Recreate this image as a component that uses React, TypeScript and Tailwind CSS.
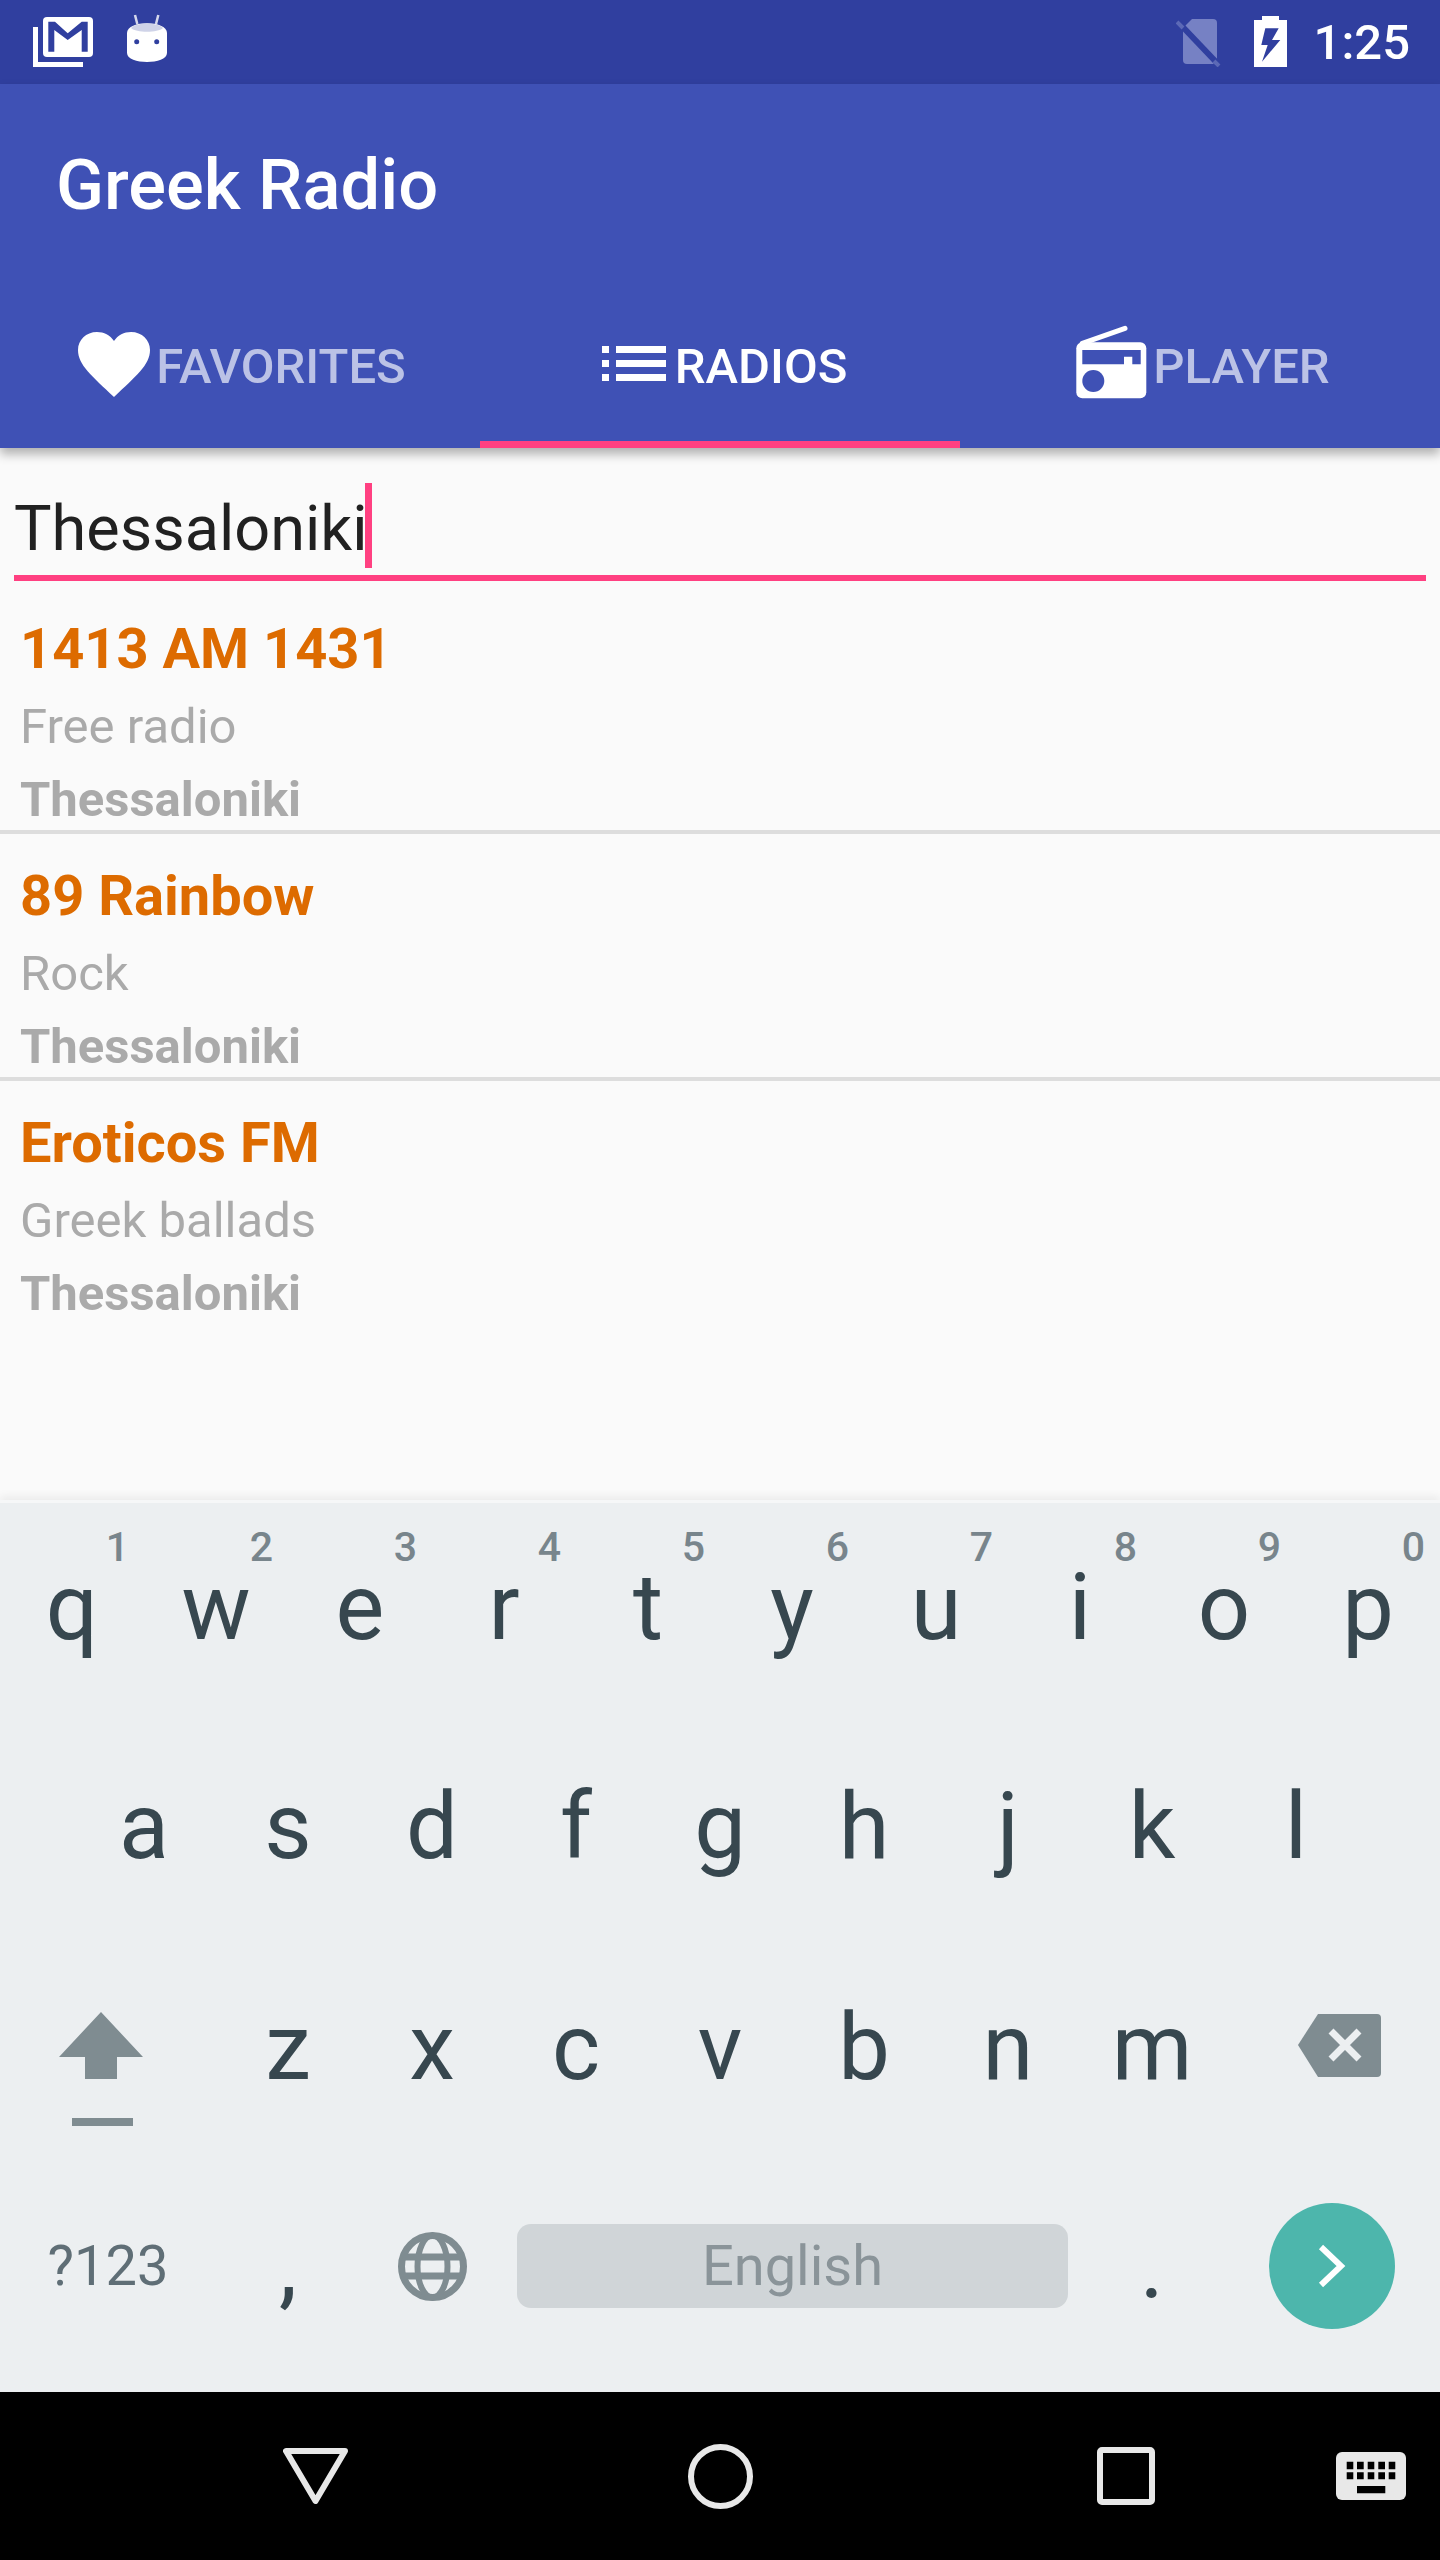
const ROW_1 = [
  ['q', '1'], ['w', '2'], ['e', '3'], ['r', '4'], ['t', '5'],
  ['y', '6'], ['u', '7'], ['i', '8'], ['o', '9'], ['p', '0'],
]
const ROW_2 = ['a', 's', 'd', 'f', 'g', 'h', 'j', 'k', 'l']
const ROW_3 = ['z', 'x', 'c', 'v', 'b', 'n', 'm']

const STATIONS = [
  { name: '1413 AM 1431', genre: 'Free radio', city: 'Thessaloniki' },
  { name: '89 Rainbow', genre: 'Rock', city: 'Thessaloniki' },
  { name: 'Eroticos FM', genre: 'Greek ballads', city: 'Thessaloniki' },
]

function StatusBar() {
  return (
    <div className="flex h-[84px] shrink-0 items-start bg-[#303f9f] pl-[33px]">
      <svg width="60" height="50" viewBox="0 0 60 50" className="mt-[17px]">
        <path d="M2.500 10v37.500h47.500" fill="none" stroke="#fff" strokeWidth="5" />
        <rect x="10" y="0" width="50" height="40" rx="4" fill="#fff" />
        <path d="M15.300 4.700H22L34.700 16.300 48.700 4.700h6v30h-6V13L34.700 23 21.300 13v21.700h-6z" fill="#303f9f" />
      </svg>
      <svg width="40" height="48" viewBox="0 0 40 48" className="ml-[34px] mt-[14px]">
        <path d="M8 1l2.300 9M31.300 1L29 10" stroke="#d5d8ec" strokeWidth="2.500" />
        <path d="M0 19C0 6 40 6 40 19v20c0 12-40 12-40 0z" fill="#fff" />
        <path d="M4 14c5-6 27-6 32 0-5 5-27 5-32 0z" fill="#cfd3e8" />
        <circle cx="9.700" cy="27.700" r="2.500" fill="#303f9f" />
        <circle cx="29.700" cy="27.700" r="2.500" fill="#303f9f" />
      </svg>
      <svg width="46" height="48" viewBox="0 0 46 48" className="ml-auto mt-[19px]">
        <path d="M16 0h21a4 4 0 0 1 4 4v41H11a4 4 0 0 1-4-4V9z" fill="#7681c4" />
        <path d="M3 4l39 41" stroke="#303f9f" strokeWidth="6" />
        <path d="M1 3l6 6M38 42l5 5" stroke="#5c69b6" strokeWidth="4" />
      </svg>
      <svg width="34" height="51" viewBox="0 0 34 51" className="ml-[31px] mt-[16px]">
        <path d="M9 0h17v4h8v47H1V4h8z" fill="#fff" />
        <path d="M12.300 12.300h13.400L19 24h8.300L9 45.700 14.700 29H8.300z" fill="#303f9f" />
      </svg>
      <span className="ml-[27px] mr-[30px] mt-[14px] text-[49px] font-medium leading-[58px] text-white">1:25</span>
    </div>
  )
}

function TabBar() {
  return (
    <div className="grid h-[168px] grid-cols-3">
      <div className="flex items-start justify-center pl-[4px] pt-[52px]">
        <svg width="72" height="65" viewBox="0 0 72 65">
          <path d="M36 65C14 44 0 33 0 18 0 8 8 0 19 0c7 0 13 3 17 9 4-6 10-9 17-9 11 0 19 8 19 18 0 15-14 26-36 47z" fill="#fff" />
        </svg>
        <span className="ml-[6px] mt-[6px] text-[49px] font-medium leading-[58px] text-[#bbc2e6]">FAVORITES</span>
      </div>
      <div className="flex items-start justify-center border-b-[7px] border-[#ff4081] pl-[8px] pt-[66px]">
        <svg width="65" height="36" viewBox="0 0 65 36">
          <path d="M1 0h7v7H1zM1 14h7v7H1zM1 28h7v7H1zM15 0h50v7H15zM15 14h50v7H15zM15 28h50v7H15z" fill="#fff" />
        </svg>
        <span className="ml-[9px] mt-[-8px] text-[49px] font-medium leading-[58px] text-white">RADIOS</span>
      </div>
      <div className="flex items-start justify-center pl-[5px] pt-[45px]">
        <svg width="72" height="74" viewBox="0 0 72 74">
          <path d="M7.300 18.300L50 3.300" fill="none" stroke="#fff" strokeWidth="5" strokeLinecap="round" />
          <rect x="1.300" y="17.300" width="70" height="56" rx="6" fill="#fff" />
          <path d="M7.300 25h58.400v14.300h-8.400v-7.600H49v7.600H7.300z" fill="#3f51b5" />
          <circle cx="18.300" cy="56" r="11" fill="#3f51b5" />
        </svg>
        <span className="ml-[6px] mt-[13px] text-[49px] font-medium leading-[58px] text-[#bbc2e6]">PLAYER</span>
      </div>
    </div>
  )
}

function SearchField() {
  return (
    <div className="mx-[14px] flex h-[133px] items-start border-b-[6px] border-[#ff4081]">
      <span className="mt-[46px] text-[63px] leading-[70px] text-[#212121]">Thessaloniki</span>
      {/* caret sits tight against the last letter */}
      <span className="-ml-[3px] mt-[35px] h-[85px] w-[7px] bg-[#ff4081]" />
    </div>
  )
}

function StationRow({ name, genre, city, last }: { name: string; genre: string; city: string; last: boolean }) {
  return (
    <div className={`pl-[20px] pt-[30px] ${last ? '' : 'border-b-4 border-[#dddddd]'}`}>
      <div className="text-[56px] font-bold leading-[64px] text-[#dd6b00]">{name}</div>
      <div className="mt-[16px] text-[49px] leading-[60px] text-[#aaaaaa]">{genre}</div>
      <div className="mt-[13px] text-[49px] font-bold leading-[60px] text-[#aaaaaa]">{city}</div>
    </div>
  )
}

function Keyboard() {
  return (
    <div className="relative z-10 h-[892px] shrink-0 bg-[#eceff1] text-[92px] text-[#37474f] shadow-[inset_0_3px_0_#f6f7f8,0_-4px_8px_rgba(0,0,0,0.06)]">
      <div className="grid h-[220px] grid-cols-10 leading-[216px]">
        {ROW_1.map(([letter, digit]) => (
          <div key={letter} className="relative text-center">
            {letter}
            <span className="absolute right-[15px] top-[27px] text-[41px] font-medium leading-[40px] text-[#78858c]">{digit}</span>
          </div>
        ))}
      </div>
      <div className="grid h-[220px] grid-cols-9 px-[72px] leading-[214px]">
        {ROW_2.map((letter) => (
          <div key={letter} className="text-center">{letter}</div>
        ))}
      </div>
      <div className="flex h-[220px] leading-[216px]">
        <div className="w-[216px] pl-[59px] pt-[72px]">
          <svg width="84" height="114" viewBox="0 0 84 114" className="block">
            <path d="M42 0l42 45H58v22H26V45H0z" fill="#7f8c91" />
            <path d="M13 106h61v8H13z" fill="#7f8c91" />
          </svg>
        </div>
        {ROW_3.map((letter) => (
          <div key={letter} className="w-[144px] text-center">{letter}</div>
        ))}
        <div className="pl-[74px] pt-[74px]">
          <svg width="83" height="63" viewBox="0 0 83 63" className="block">
            <path d="M20 0h59a4 4 0 0 1 4 4v55a4 4 0 0 1-4 4H20L0 31z" fill="#7f8c91" />
            <path d="M33 17l28 28M61 17L33 45" stroke="#eceff1" strokeWidth="7" />
          </svg>
        </div>
      </div>
      <div className="flex h-[232px] items-center pb-[20px]">
        <div className="w-[216px] text-center text-[56px] text-[#5f6e76]">?123</div>
        <div className="w-[144px] text-center leading-[92px]">,</div>
        <div className="flex w-[144px] justify-center">
          <svg width="71" height="71" viewBox="0 0 71 71">
            <circle cx="35.500" cy="35.500" r="31" fill="none" stroke="#7f8c91" strokeWidth="7" />
            <ellipse cx="35.500" cy="35.500" rx="15" ry="31" fill="none" stroke="#7f8c91" strokeWidth="6" />
            <path d="M5 26h61M5 45h61" stroke="#7f8c91" strokeWidth="7" />
          </svg>
        </div>
        <div className="ml-[13px] flex h-[84px] w-[551px] items-center justify-center rounded-[14px] bg-[#d0d5d8] text-[56px] text-[#8a9499]">English</div>
        <div className="ml-[12px] w-[144px] text-center leading-[92px]">.</div>
        <div className="flex w-[216px] justify-center">
          <div className="flex h-[126px] w-[126px] items-center justify-center rounded-full bg-[#4db6ac]">
            <svg width="28" height="44" viewBox="0 0 28 44">
              <path d="M3 3l20 19L3 41" fill="none" stroke="#fff" strokeWidth="6" />
            </svg>
          </div>
        </div>
      </div>
    </div>
  )
}

function NavBar() {
  return (
    <div className="flex h-[168px] shrink-0 items-center bg-black pl-[283px]">
      <svg width="65" height="56" viewBox="0 0 65 56">
        <path d="M3 3h59L32.500 53z" fill="none" stroke="#e8e8e8" strokeWidth="6" strokeLinejoin="round" />
      </svg>
      <svg width="65" height="65" viewBox="0 0 65 65" className="ml-[340px]">
        <circle cx="32.500" cy="32.500" r="29.500" fill="none" stroke="#e8e8e8" strokeWidth="6" />
      </svg>
      <svg width="58" height="58" viewBox="0 0 58 58" className="ml-[344px]">
        <rect x="3" y="3" width="52" height="52" rx="2" fill="none" stroke="#e8e8e8" strokeWidth="6" />
      </svg>
      <svg width="72" height="50" viewBox="0 0 72 50" className="ml-[180px]">
        <rect x="1" y="1" width="70" height="48" rx="6" fill="#e8e8e8" />
        <path d="M11.700 10.700h6.600v7.600h-6.600zM22 10.700h6.700v7.600H22zM32.700 10.700h6.600v7.600h-6.600zM43.300 10.700H50v7.600h-6.700zM53.700 10.700h6.600v7.600h-6.600zM11.700 21.300h6.600v7h-6.600zM22 21.300h6.700v7H22zM32.700 21.300h6.600v7h-6.600zM43.300 21.300H50v7h-6.700zM53.700 21.300h6.600v7h-6.600zM22 35h28.300v7.300H22z" fill="#000" />
      </svg>
    </div>
  )
}

export default function App() {
  return (
    <div className="flex h-[2560px] w-[1440px] flex-col overflow-hidden bg-[#fafafa] font-['Roboto',sans-serif]">
      <StatusBar />
      <div className="relative z-10 shrink-0 bg-[#3f51b5] shadow-[0_6px_10px_rgba(0,0,0,0.3)]">
        <div className="flex h-[196px] items-start pl-[56px] pt-[60px]">
          <h1 className="text-[70.500px] font-medium leading-[82px] text-white">Greek Radio</h1>
        </div>
        <TabBar />
      </div>
      <div className="flex-1">
        <SearchField />
        <div className="mt-[6px]">
          {STATIONS.map((s, i) => (
            <StationRow key={s.name} name={s.name} genre={s.genre} city={s.city} last={i === STATIONS.length - 1} />
          ))}
        </div>
      </div>
      <Keyboard />
      <NavBar />
    </div>
  )
}
